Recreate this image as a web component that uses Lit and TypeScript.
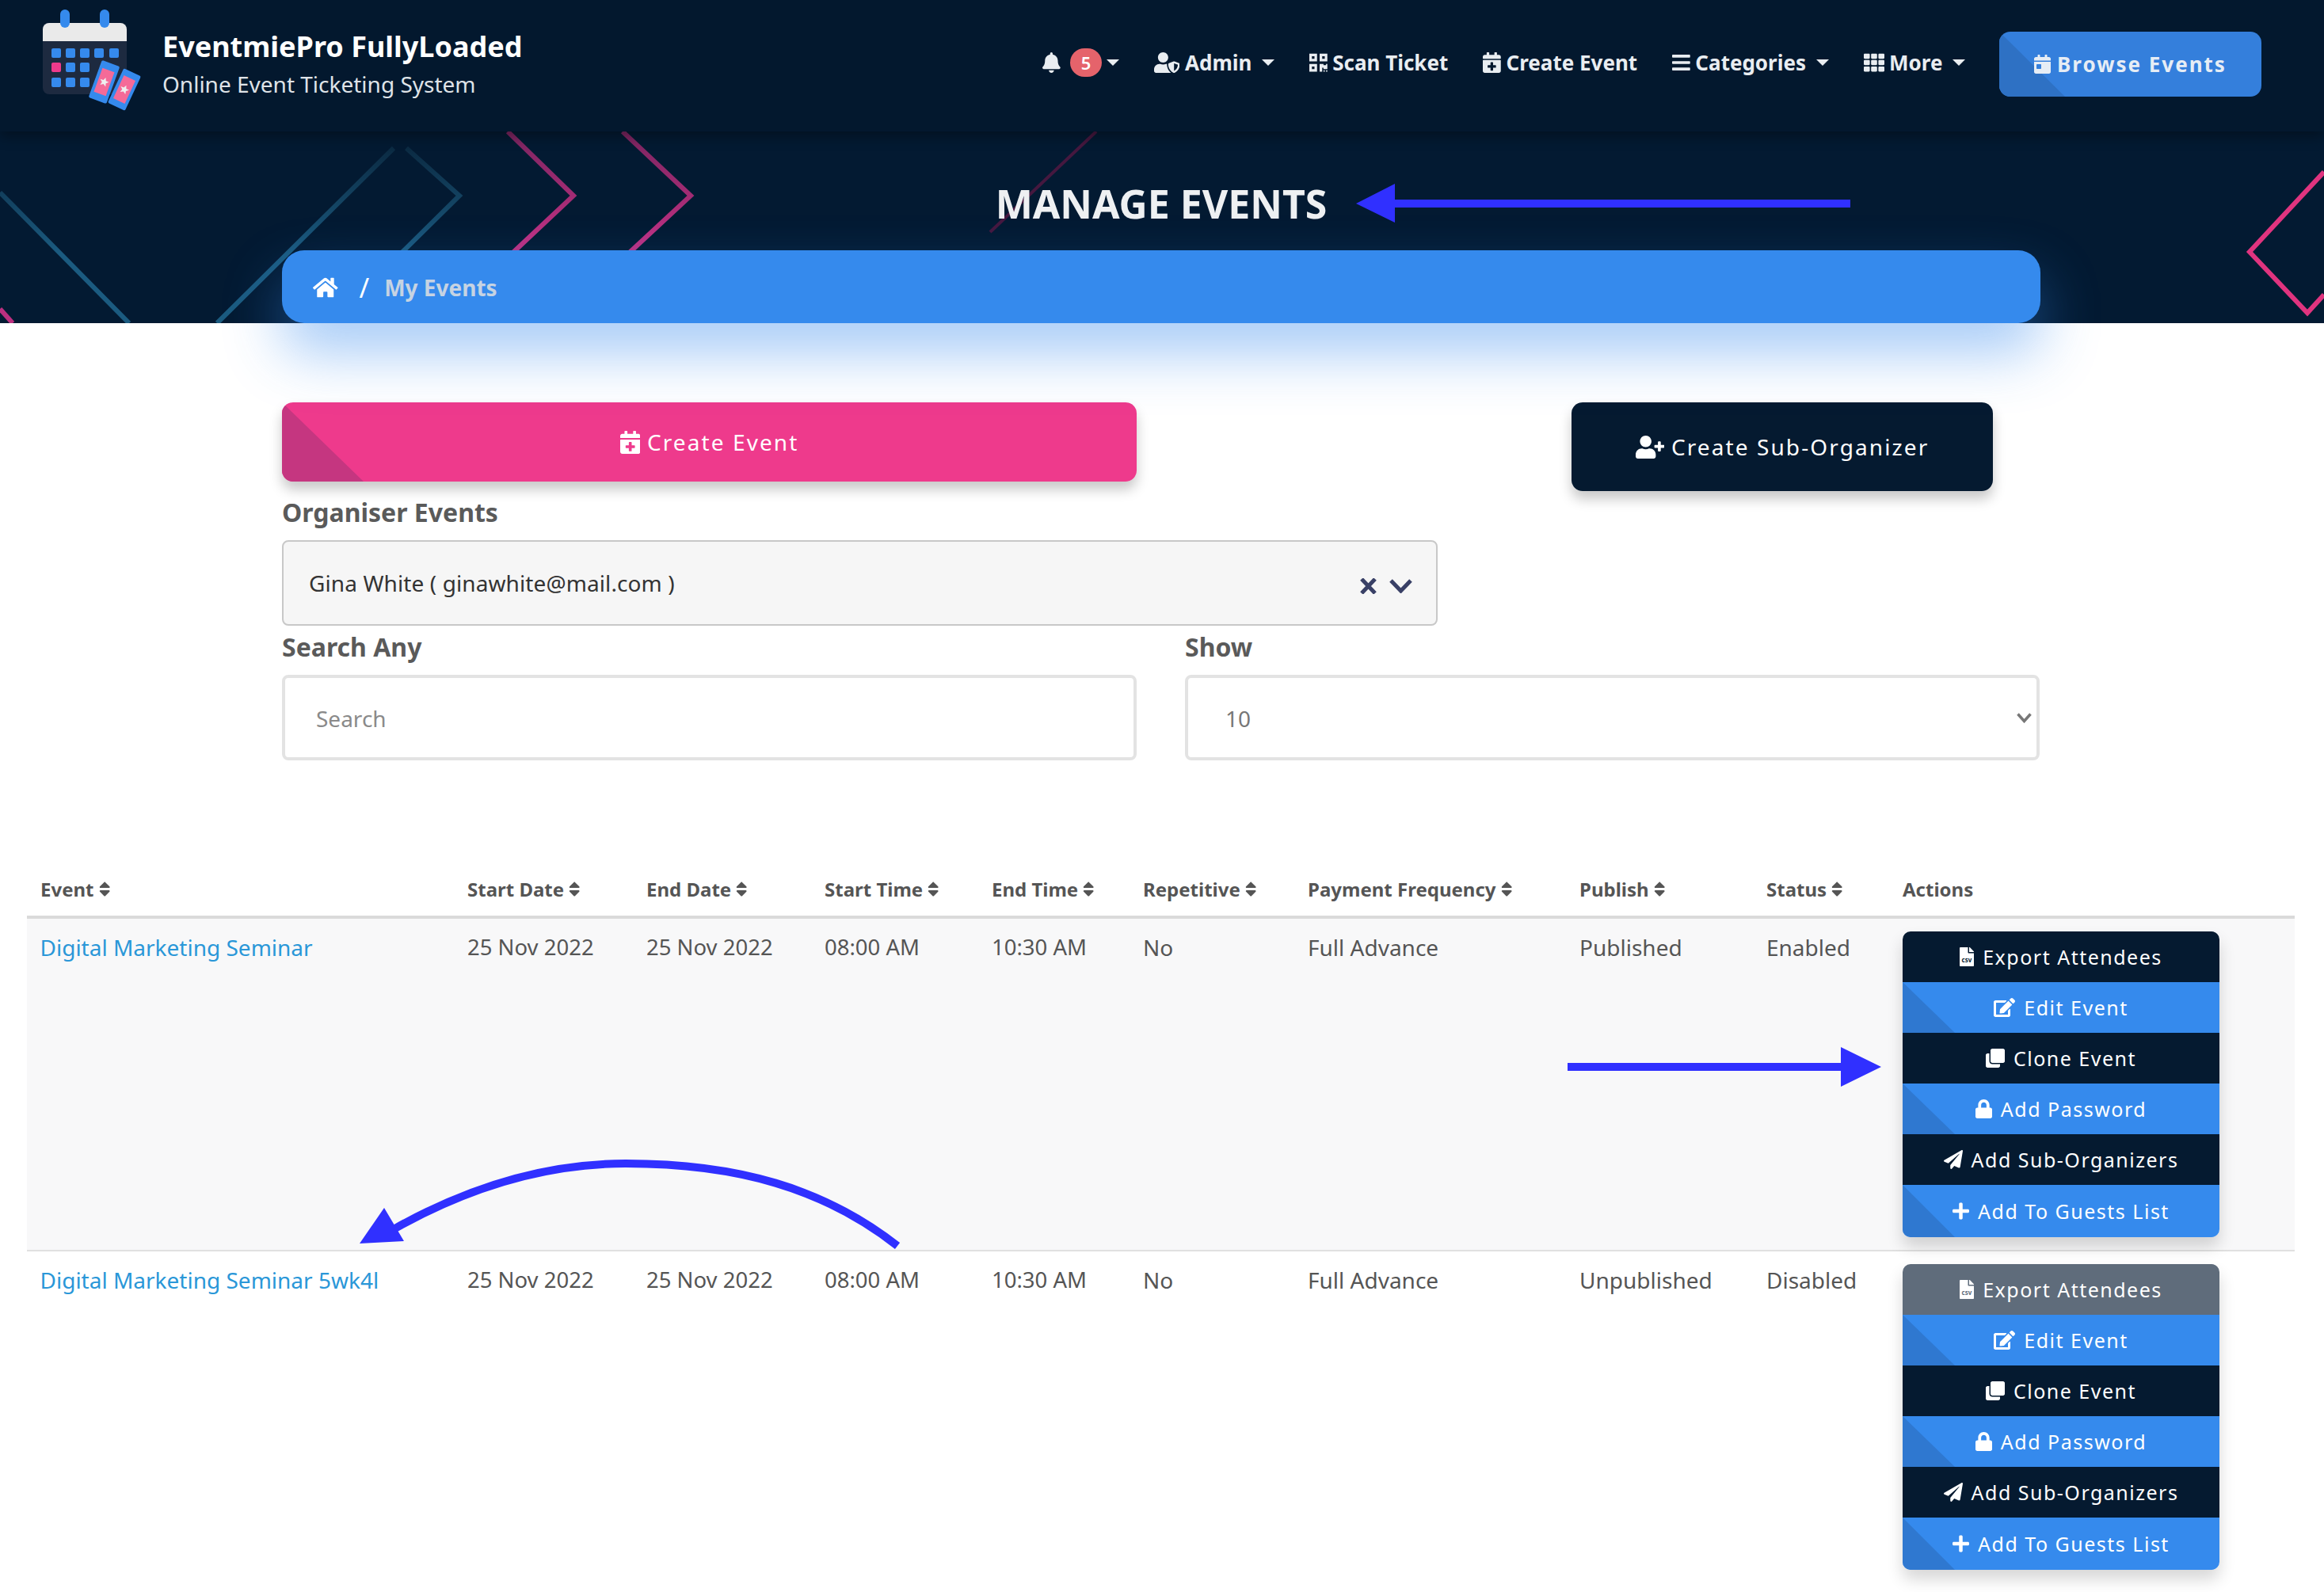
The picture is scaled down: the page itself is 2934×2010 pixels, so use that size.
import { LitElement, html, css } from 'lit';
import { customElement } from 'lit/decorators.js';

const ICONS: Record<string, [number, string]> = {
  bell: [448, 'M224 512c35.32 0 63.97-28.65 63.97-64H160.03c0 35.35 28.65 64 63.97 64zm215.39-149.71c-19.32-20.76-55.47-51.99-55.47-154.29 0-77.7-54.48-139.9-127.94-155.16V32c0-17.67-14.32-32-31.98-32s-31.98 14.33-31.98 32v20.84C118.56 68.1 64.08 130.3 64.08 208c0 102.3-36.15 133.53-55.47 154.29-6 6.45-8.66 14.16-8.61 21.71.11 16.4 12.98 32 32.1 32h383.8c19.12 0 32-15.6 32.1-32 .05-7.55-2.61-15.27-8.61-21.71z'],
  home: [576, 'M280.37 148.26L96 300.11V464a16 16 0 0 0 16 16l112.06-.29a16 16 0 0 0 15.92-16V368a16 16 0 0 1 16-16h64a16 16 0 0 1 16 16v95.64a16 16 0 0 0 16 16.05L464 480a16 16 0 0 0 16-16V300L295.67 148.26a12.19 12.19 0 0 0-15.3 0zM571.6 251.47L488 182.56V44.05a12 12 0 0 0-12-12h-56a12 12 0 0 0-12 12v72.61L318.47 43a48 48 0 0 0-61 0L4.34 251.47a12 12 0 0 0-1.6 16.9l25.5 31A12 12 0 0 0 45.15 301l235.22-193.74a12.19 12.19 0 0 1 15.3 0L530.9 301a12 12 0 0 0 16.9-1.6l25.5-31a12 12 0 0 0-1.7-16.93z'],
  calendarPlus: [448, 'M436 160H12c-6.6 0-12-5.4-12-12v-36c0-26.5 21.5-48 48-48h48V12c0-6.6 5.4-12 12-12h40c6.6 0 12 5.4 12 12v52h128V12c0-6.6 5.4-12 12-12h40c6.6 0 12 5.4 12 12v52h48c26.5 0 48 21.5 48 48v36c0 6.6-5.4 12-12 12zM12 192h424c6.6 0 12 5.4 12 12v260c0 26.5-21.5 48-48 48H48c-26.5 0-48-21.5-48-48V204c0-6.6 5.4-12 12-12zm316 140c0-6.6-5.4-12-12-12h-60v-60c0-6.6-5.4-12-12-12h-40c-6.6 0-12 5.4-12 12v60h-60c-6.6 0-12 5.4-12 12v40c0 6.6 5.4 12 12 12h60v60c0 6.6 5.4 12 12 12h40c6.6 0 12-5.4 12-12v-60h60c6.6 0 12-5.4 12-12v-40z'],
  calendarDay: [448, 'M0 464c0 26.5 21.5 48 48 48h352c26.5 0 48-21.5 48-48V192H0v272zm64-192c0-8.8 7.2-16 16-16h96c8.8 0 16 7.2 16 16v96c0 8.8-7.2 16-16 16H80c-8.8 0-16-7.2-16-16v-96zM400 64h-48V16c0-8.8-7.2-16-16-16h-32c-8.8 0-16 7.2-16 16v48H160V16c0-8.8-7.2-16-16-16h-32c-8.8 0-16 7.2-16 16v48H48C21.5 64 0 85.5 0 112v48h448v-48c0-26.5-21.5-48-48-48z'],
  bars: [448, 'M16 132h416c8.837 0 16-7.163 16-16V76c0-8.837-7.163-16-16-16H16C7.163 60 0 67.163 0 76v40c0 8.837 7.163 16 16 16zm0 160h416c8.837 0 16-7.163 16-16v-40c0-8.837-7.163-16-16-16H16c-8.837 0-16 7.163-16 16v40c0 8.837 7.163 16 16 16zm0 160h416c8.837 0 16-7.163 16-16v-40c0-8.837-7.163-16-16-16H16c-8.837 0-16 7.163-16 16v40c0 8.837 7.163 16 16 16z'],
  th: [512, 'M149.333 56v80c0 13.255-10.745 24-24 24H24c-13.255 0-24-10.745-24-24V56c0-13.255 10.745-24 24-24h101.333c13.255 0 24 10.745 24 24zm181.334 240v-80c0-13.255-10.745-24-24-24H205.333c-13.255 0-24 10.745-24 24v80c0 13.255 10.745 24 24 24h101.333c13.256 0 24.001-10.745 24.001-24zm32-240v80c0 13.255 10.745 24 24 24H488c13.255 0 24-10.745 24-24V56c0-13.255-10.745-24-24-24H386.667c-13.255 0-24 10.745-24 24zm-32 80V56c0-13.255-10.745-24-24-24H205.333c-13.255 0-24 10.745-24 24v80c0 13.255 10.745 24 24 24h101.333c13.256 0 24.001-10.745 24.001-24zm-205.334 56H24c-13.255 0-24 10.745-24 24v80c0 13.255 10.745 24 24 24h101.333c13.255 0 24-10.745 24-24v-80c0-13.255-10.745-24-24-24zM0 376v80c0 13.255 10.745 24 24 24h101.333c13.255 0 24-10.745 24-24v-80c0-13.255-10.745-24-24-24H24c-13.255 0-24 10.745-24 24zm386.667-56H488c13.255 0 24-10.745 24-24v-80c0-13.255-10.745-24-24-24H386.667c-13.255 0-24 10.745-24 24v80c0 13.255 10.745 24 24 24zm0 160H488c13.255 0 24-10.745 24-24v-80c0-13.255-10.745-24-24-24H386.667c-13.255 0-24 10.745-24 24v80c0 13.255 10.745 24 24 24zM181.333 376v80c0 13.255 10.745 24 24 24h101.333c13.255 0 24-10.745 24-24v-80c0-13.255-10.745-24-24-24H205.333c-13.255 0-24 10.745-24 24z'],
  qrcode: [448, 'M0 224h192V32H0v192zM64 96h64v64H64V96zm192-64v192h192V32H256zm128 128h-64V96h64v64zM0 480h192V288H0v192zm64-128h64v64H64v-64zm352-64h32v128h-96v-32h-32v96h-64V288h96v32h64v-32zm0 160h32v32h-32v-32zm-64 0h32v32h-32v-32z'],
  userPlus: [640, 'M624 208h-64v-64c0-8.8-7.2-16-16-16h-32c-8.8 0-16 7.2-16 16v64h-64c-8.8 0-16 7.2-16 16v32c0 8.8 7.2 16 16 16h64v64c0 8.8 7.2 16 16 16h32c8.8 0 16-7.2 16-16v-64h64c8.8 0 16-7.2 16-16v-32c0-8.8-7.2-16-16-16zm-400 48c70.7 0 128-57.3 128-128S294.7 0 224 0 96 57.3 96 128s57.3 128 128 128zm89.6 32h-16.7c-22.2 10.2-46.9 16-72.9 16s-50.6-5.8-72.9-16h-16.7C60.2 288 0 348.2 0 422.4V464c0 26.5 21.5 48 48 48h352c26.5 0 48-21.5 48-48v-41.6c0-74.2-60.2-134.4-134.4-134.4z'],
  userShield: [640, 'M622.3 271.1l-115.2-45c-4.1-1.6-12.6-3.7-22.2 0l-115.2 45c-10.7 4.2-17.7 14-17.7 24.9 0 111.6 68.7 188.8 132.9 213.9 9.6 3.7 18 1.6 22.2 0C558.4 489.9 640 420.5 640 296c0-10.9-7-20.7-17.7-24.9zM496 462.4V273.3l95.5 37.3c-5.6 87.1-60.9 135.4-95.5 151.8zM224 256c70.7 0 128-57.3 128-128S294.7 0 224 0 96 57.3 96 128s57.3 128 128 128zm96 40c0-2.5.8-4.8 1.1-7.2-2.5-.1-4.9-.8-7.5-.8h-16.7c-22.2 10.2-46.9 16-72.9 16s-50.6-5.8-72.9-16h-16.7C60.2 288 0 348.2 0 422.4V464c0 26.5 21.5 48 48 48h352c6.8 0 13.3-1.5 19.2-4-54-42.9-99.2-116.7-99.2-212z'],
  edit: [576, 'M402.6 83.2l90.2 90.2c3.8 3.8 3.8 10 0 13.8L274.4 405.6l-92.8 10.3c-12.4 1.4-22.9-9.1-21.5-21.5l10.3-92.8L388.8 83.2c3.8-3.8 10-3.8 13.8 0zm162-22.9l-48.8-48.8c-15.2-15.2-39.9-15.2-55.2 0l-35.4 35.4c-3.8 3.8-3.8 10 0 13.8l90.2 90.2c3.8 3.8 10 3.8 13.8 0l35.4-35.4c15.2-15.3 15.2-40 0-55.2zM384 346.2V448H64V128h229.8c3.2 0 6.2-1.3 8.5-3.5l40-40c7.6-7.6 2.2-20.5-8.5-20.5H48C21.5 64 0 85.5 0 112v352c0 26.5 21.5 48 48 48h352c26.5 0 48-21.5 48-48V306.2c0-10.7-12.9-16-20.5-8.5l-40 40c-2.2 2.3-3.5 5.3-3.5 8.5z'],
  clone: [512, 'M464 0c26.51 0 48 21.49 48 48v288c0 26.51-21.49 48-48 48H176c-26.51 0-48-21.49-48-48V48c0-26.51 21.49-48 48-48h288M176 416c-44.112 0-80-35.888-80-80V128H48c-26.51 0-48 21.49-48 48v288c0 26.51 21.49 48 48 48h288c26.51 0 48-21.49 48-48v-48H176z'],
  lock: [448, 'M400 224h-24v-72C376 68.2 307.8 0 224 0S72 68.2 72 152v72H48c-26.5 0-48 21.5-48 48v192c0 26.5 21.5 48 48 48h352c26.5 0 48-21.5 48-48V272c0-26.5-21.5-48-48-48zm-104 0H152v-72c0-39.7 32.3-72 72-72s72 32.3 72 72v72z'],
  plane: [512, 'M476 3.2L12.5 270.6c-18.1 10.4-15.8 35.6 2.2 43.2L121 358.4l287.3-253.2c5.5-4.9 13.3 2.6 8.6 8.3L176 407v80.5c0 23.6 28.5 32.9 42.5 15.8L282 426l124.6 52.2c14.2 6 30.4-2.9 33-18.2l72-432C515 7.8 493.3-6.8 476 3.2z'],
  plus: [448, 'M416 208H272V64c0-17.67-14.33-32-32-32h-32c-17.67 0-32 14.33-32 32v144H32c-17.67 0-32 14.33-32 32v32c0 17.67 14.33 32 32 32h144v144c0 17.67 14.33 32 32 32h32c17.67 0 32-14.33 32-32V304h144c17.67 0 32-14.33 32-32v-32c0-17.67-14.33-32-32-32z'],
  sort: [320, 'M41 288h238c21.4 0 32.1 25.9 17 41L177 448c-9.4 9.4-24.6 9.4-33.9 0L24 329c-15.1-15.1-4.4-41 17-41zm255-105L177 64c-9.4-9.4-24.6-9.4-33.9 0L24 183c-15.1 15.1-4.4 41 17 41h238c21.4 0 32.1-25.9 17-41z'],
};

const FILE_PATH = 'M224 136V0H24C10.7 0 0 10.7 0 24v464c0 13.3 10.7 24 24 24h336c13.3 0 24-10.7 24-24V160H248c-13.2 0-24-10.8-24-24zM377 105L279.1 7c-4.5-4.5-10.6-7-17-7H256v128h128v-6.1c0-6.3-2.5-12.4-7-16.9z';

const icon = (name: string) => {
  const [w, d] = ICONS[name];
  return html`<svg class="ic" viewBox="0 0 ${w} 512" fill="currentColor"><path d=${d}></path></svg>`;
};

const NAV = [
  { icon: 'userShield', label: 'Admin', caret: true },
  { icon: 'qrcode', label: 'Scan Ticket', caret: false },
  { icon: 'calendarPlus', label: 'Create Event', caret: false },
  { icon: 'bars', label: 'Categories', caret: true },
  { icon: 'th', label: 'More', caret: true },
];

const HEADS = ['Event', 'Start Date', 'End Date', 'Start Time', 'End Time', 'Repetitive', 'Payment Frequency', 'Publish', 'Status'];

const ROWS = [
  { name: 'Digital Marketing Seminar', publish: 'Published', status: 'Enabled', muted: false },
  { name: 'Digital Marketing Seminar 5wk4l', publish: 'Unpublished', status: 'Disabled', muted: true },
];

const ACTIONS = [
  { icon: 'edit', label: 'Edit Event', blue: true },
  { icon: 'clone', label: 'Clone Event', blue: false },
  { icon: 'lock', label: 'Add Password', blue: true },
  { icon: 'plane', label: 'Add Sub-Organizers', blue: false },
  { icon: 'plus', label: 'Add To Guests List', blue: true },
];

const STAR = '0,-9 2.6,-3 9,-2.8 4,1.4 5.6,7.6 0,4.2 -5.6,7.6 -4,1.4 -9,-2.8 -2.6,-3';

@customElement('app-root')
export class AppRoot extends LitElement {
  static styles = css`
    :host {
      display: block;
      position: relative;
      height: 2010px;
      overflow: hidden;
      background: #fff;
      font-family: 'Noto Sans', 'Open Sans', sans-serif;
      color: #555;
    }

    .ic { display: block; flex: none; height: 24px; width: auto; }

    /* header */
    .header {
      position: relative;
      z-index: 3;
      height: 166px;
      padding: 0 79px 0 30px;
      display: flex;
      align-items: center;
      background: #03182e;
      box-shadow: 0 6px 16px rgba(0, 0, 0, 0.35);
      box-sizing: border-box;
    }
    .logo { flex: none; width: 170px; height: 150px; }
    .brand { margin: 0 0 6px 5px; display: flex; flex-direction: column; gap: 3px; }
    .brand-title { font-size: 36px; line-height: 48px; font-weight: 700; color: #fff; }
    .brand-sub { font-size: 28px; line-height: 40px; color: #dfe3e8; }

    .nav { margin: 0 0 4px auto; display: flex; align-items: center; gap: 44px; color: #e9edf1; }
    .nav-item { display: flex; align-items: center; gap: 6.5px; margin-bottom: 4px; font-size: 26px; line-height: 36px; font-weight: 700; }
    .nav-item .ic { height: 26px; }
    .caret {
      margin-left: 6px;
      width: 0;
      height: 0;
      border-left: 8px solid transparent;
      border-right: 8px solid transparent;
      border-top: 8px solid currentColor;
    }
    .bell { gap: 0; }
    .badge {
      margin-left: 12px;
      width: 40px;
      height: 36px;
      border-radius: 18px;
      background: #e5636b;
      color: #fff;
      font-size: 22px;
      font-weight: 600;
      text-align: center;
      line-height: 36px;
    }
    .browse {
      position: relative;
      overflow: hidden;
      width: 331px;
      height: 82px;
      margin-left: -1px;
      display: flex;
      align-items: center;
      justify-content: center;
      gap: 8px;
      border-radius: 14px;
      background: #347fdc;
      color: #e6edf5;
      font-size: 26px;
      font-weight: 700;
      letter-spacing: 2px;
    }
    .browse::before, .btn-pink::before, .act.blue::before {
      content: '';
      position: absolute;
      left: 0;
      top: 0;
      bottom: 0;
      clip-path: polygon(0 0, 100% 100%, 0 100%);
    }
    .browse::before { width: 83px; background: #2e71c4; }
    .browse span, .browse .ic { position: relative; }

    /* hero */
    .hero {
      position: relative;
      z-index: 2;
      height: 242px;
      display: flex;
      flex-direction: column;
      align-items: center;
      padding-top: 56px;
      box-sizing: border-box;
      background: #031a32;
    }
    .chevrons { position: absolute; inset: 0; width: 100%; height: 100%; }
    .hero h1 {
      position: relative;
      margin: 0 2px 24px 0;
      font-size: 50px;
      line-height: 70px;
      font-weight: 700;
      color: #eef0f2;
    }
    .crumb {
      position: relative;
      box-sizing: border-box;
      width: 2220px;
      height: 92px;
      margin-right: 2px;
      padding: 2px 0 0 39px;
      display: flex;
      align-items: center;
      border-radius: 28px;
      background: #358aed;
      box-shadow: 0 36px 72px rgba(54, 138, 237, 0.46);
      font-size: 28px;
      font-weight: 700;
      color: #c6d3e2;
    }
    .crumb .ic { color: #fff; height: 28px; }
    .crumb .sep { margin: 0 19px 0 27px; color: #fff; font-size: 34px; font-weight: 400; }

    /* form */
    .form { width: 2220px; margin-left: 356px; padding-top: 100px; }
    .btns { display: flex; align-items: flex-start; gap: 549px; }
    .btn {
      position: relative;
      overflow: hidden;
      box-sizing: border-box;
      display: flex;
      align-items: center;
      justify-content: center;
      gap: 9px;
      border-radius: 14px;
      color: #fff;
      font-size: 28px;
      letter-spacing: 2.1px;
    }
    .btn-wrap { border-radius: 14px; box-shadow: 0 10px 16px rgba(0, 0, 0, 0.22); }
    .btn-pink { width: 1079px; height: 100px; background: #ee3a8c; }
    .btn-pink::before { width: 103px; background: #c53680; }
    .btn-pink span, .btn-pink .ic { position: relative; }
    .btn-dark { width: 532px; height: 112px; background: #051a30; }
    .btn-pink .ic, .btn-dark .ic { height: 29px; }

    .label { font-size: 32px; line-height: 44px; font-weight: 700; color: #5a5a5a; }
    .label-org { margin-top: 5px; margin-bottom: 13px; }

    .org {
      box-sizing: border-box;
      width: 1459px;
      height: 108px;
      padding: 0 30px 0 32px;
      display: flex;
      align-items: center;
      background: #f6f6f6;
      border: 2px solid #c8c8c8;
      border-radius: 8px;
      color: #333;
      font-size: 28px;
      letter-spacing: 0.1px;
    }
    .org-icons { margin-left: auto; display: flex; align-items: center; gap: 16px; padding-top: 8px; }
    .org-x { width: 21px; height: 20px; }
    .org-chev { width: 29px; height: 18px; }

    .filters {
      margin-top: 5px;
      display: grid;
      grid-template-columns: 1079px 1079px;
      column-gap: 61px;
    }
    .filters .label { margin-bottom: 13px; }
    .field {
      position: relative;
      box-sizing: border-box;
      width: 100%;
      height: 108px;
      padding-top: 2px;
      border: 4px solid #e3e3e3;
      border-radius: 8px;
      background: #fff;
      font: 28px 'Noto Sans', sans-serif;
      color: #777;
      outline: none;
    }
    input.field { padding: 2px 39px 0; }
    input.field::placeholder { color: #8a8a8a; opacity: 1; }
    select.field { padding: 2px 47px 0; appearance: none; }
    .select-wrap { position: relative; }
    .select-chev { position: absolute; right: 10px; top: 48px; width: 19px; height: 13px; }

    /* table */
    .table { margin: 130px 37px 0 34px; }
    .row {
      display: grid;
      grid-template-columns: 539px 226px 225px 211px 191px 208px 343px 236px 172px 512px;
    }
    .thead { border-bottom: 4px solid #dadada; height: 66px; box-sizing: content-box; }
    .th {
      padding: 0 17px;
      display: flex;
      align-items: center;
      gap: 6px;
      height: 66px;
      margin-top: -1px;
      font-size: 24px;
      font-weight: 700;
      color: #555;
      white-space: nowrap;
    }
    .th .ic { height: 23px; }
    .tr.odd { background: #f8f8f9; border-bottom: 2px solid #e0e0e0; }
    .td {
      padding: 16px 17px;
      font-size: 28px;
      line-height: 40px;
      color: #555;
      white-space: nowrap;
    }
    .td.when { font-size: 27.5px; }
    .td a { color: #2a97d8; text-decoration: none; margin-left: -0.5px; }

    .stack {
      width: 400px;
      border-radius: 10px;
      overflow: hidden;
      box-shadow: 0 12px 20px rgba(0, 0, 0, 0.16);
    }
    .act {
      --row-bg: #051a30;
      position: relative;
      box-sizing: border-box;
      height: 64px;
      display: flex;
      align-items: center;
      justify-content: center;
      gap: 11px;
      background: var(--row-bg);
      color: #fff;
      font-size: 25px;
      letter-spacing: 1.5px;
    }
    .act:last-child { height: 66px; }
    .act.blue { --row-bg: #358aed; }
    .act.blue::before { width: 66px; background: #2f78d0; }
    .act.muted { --row-bg: #5f6c7b; }
    .act span, .act .ic { position: relative; }
    .csv-text { font: 700 170px 'Noto Sans', sans-serif; fill: var(--row-bg); }

    /* annotations sit over the page */
    .marks { position: absolute; left: 0; top: 0; width: 2934px; height: 2010px; z-index: 5; pointer-events: none; }
  `;

  private renderStack(muted: boolean) {
    return html`
      <div class="stack">
        <div class="act ${muted ? 'muted' : ''}">
          <svg class="ic" viewBox="0 0 384 512" fill="currentColor">
            <path d=${FILE_PATH}></path>
            <text class="csv-text" x="192" y="410" text-anchor="middle">csv</text>
          </svg>
          <span>Export Attendees</span>
        </div>
        ${ACTIONS.map(a => html`
          <div class="act ${a.blue ? 'blue' : ''}">${icon(a.icon)}<span>${a.label}</span></div>
        `)}
      </div>
    `;
  }

  render() {
    return html`
      <header class="header">
        <svg class="logo" viewBox="30 8 170 150">
          <rect x="54" y="29" width="106" height="90" rx="8" fill="#1d2a40"></rect>
          <path d="M54 52V37a8 8 0 0 1 8-8h90a8 8 0 0 1 8 8v15z" fill="#eaeaea"></path>
          <rect x="76" y="12" width="12" height="23" rx="6" fill="#358aed"></rect>
          <rect x="126" y="12" width="12" height="23" rx="6" fill="#358aed"></rect>
          ${[65, 83, 101, 119, 138].map(x => html`<svg><rect x=${x} y="61" width="12" height="12" rx="2" fill="#358aed"></rect></svg>`)}
          ${[65, 83, 101].map((x, i) => html`<svg><rect x=${x} y="79" width="12" height="12" rx="2" fill=${i === 0 ? '#ee3a8c' : '#358aed'}></rect></svg>`)}
          ${[65, 83, 101].map(x => html`<svg><rect x=${x} y="98" width="12" height="12" rx="2" fill="#358aed"></rect></svg>`)}
          <g transform="translate(131.5 103.5) rotate(20)">
            <rect x="-12" y="-25" width="24" height="50" rx="2" fill="#358aed"></rect>
            <rect x="-8" y="-16" width="16" height="32" fill="#f56a98"></rect>
            <polygon points=${STAR} transform="scale(.65)" fill="#eee"></polygon>
          </g>
          <g transform="translate(157 113) rotate(25)">
            <rect x="-12" y="-24" width="24" height="48" rx="2" fill="#358aed"></rect>
            <rect x="-8" y="-16" width="16" height="32" fill="#f56a98"></rect>
            <polygon points=${STAR} transform="scale(.65)" fill="#eee"></polygon>
          </g>
        </svg>
        <div class="brand">
          <div class="brand-title">EventmiePro FullyLoaded</div>
          <div class="brand-sub">Online Event Ticketing System</div>
        </div>
        <nav class="nav">
          <div class="nav-item bell">${icon('bell')}<span class="badge">5</span><span class="caret"></span></div>
          ${NAV.map(n => html`
            <div class="nav-item">${icon(n.icon)}<span>${n.label}</span>${n.caret ? html`<span class="caret"></span>` : ''}</div>
          `)}
          <div class="browse">${icon('calendarDay')}<span>Browse Events</span></div>
        </nav>
      </header>

      <section class="hero">
        <svg class="chevrons" viewBox="0 166 2934 242" fill="none" stroke-width="6">
          <defs>
            <linearGradient id="pink" gradientUnits="userSpaceOnUse" x1="0" y1="166" x2="0" y2="300">
              <stop offset="0" stop-color="#7a2560"></stop>
              <stop offset="1" stop-color="#bc3080"></stop>
            </linearGradient>
            <linearGradient id="teal" gradientUnits="userSpaceOnUse" x1="0" y1="185" x2="0" y2="320">
              <stop offset="0" stop-color="#0b2a42"></stop>
              <stop offset="1" stop-color="#1b5b80"></stop>
            </linearGradient>
          </defs>
          <path d="M641 166L724 247L640 326M786 166L872 247L787 326" stroke="url(#pink)"></path>
          <path d="M0 390L16 408" stroke="#bc3080"></path>
          <path d="M0 243L163 408M274 408L497 187M513 187L580 247L500 326" stroke="url(#teal)"></path>
          <path d="M1384 166L1250 293" stroke="#45183f" stroke-width="4"></path>
          <path d="M2934 217L2840 318L2913 395L2934 372" stroke="#e0347f"></path>
        </svg>
        <h1>MANAGE EVENTS</h1>
        <div class="crumb">${icon('home')}<span class="sep">/</span><span>My Events</span></div>
      </section>

      <section class="form">
        <div class="btns">
          <div class="btn-wrap"><div class="btn btn-pink">${icon('calendarPlus')}<span>Create Event</span></div></div>
          <div class="btn-wrap"><div class="btn btn-dark">${icon('userPlus')}<span>Create Sub-Organizer</span></div></div>
        </div>
        <div class="label label-org">Organiser Events</div>
        <div class="org">
          <span>Gina White ( ginawhite@mail.com )</span>
          <span class="org-icons">
            <svg class="org-x" viewBox="0 0 21 20" fill="none" stroke="#394066" stroke-width="5"><path d="M2 1L19 19M19 1L2 19"></path></svg>
            <svg class="org-chev" viewBox="0 0 29 18" fill="none" stroke="#394066" stroke-width="5"><path d="M2 2L14.5 15L27 2"></path></svg>
          </span>
        </div>
        <div class="filters">
          <div>
            <div class="label">Search Any</div>
            <input class="field" placeholder="Search" />
          </div>
          <div>
            <div class="label">Show</div>
            <div class="select-wrap">
              <select class="field"><option>10</option></select>
              <svg class="select-chev" viewBox="0 0 19 13" fill="none" stroke="#777" stroke-width="3.5"><path d="M1.5 1.5L9.5 10.5L17.5 1.5"></path></svg>
            </div>
          </div>
        </div>
      </section>

      <section class="table">
        <div class="row thead">
          ${HEADS.map(h => html`<div class="th"><span>${h}</span>${icon('sort')}</div>`)}
          <div class="th"><span>Actions</span></div>
        </div>
        ${ROWS.map((r, i) => html`
          <div class="row tr ${i % 2 === 0 ? 'odd' : ''}">
            <div class="td"><a>${r.name}</a></div>
            <div class="td when">25 Nov 2022</div>
            <div class="td when">25 Nov 2022</div>
            <div class="td when">08:00 AM</div>
            <div class="td when">10:30 AM</div>
            <div class="td">No</div>
            <div class="td">Full Advance</div>
            <div class="td">${r.publish}</div>
            <div class="td">${r.status}</div>
            <div class="td">${this.renderStack(r.muted)}</div>
          </div>
        `)}
      </section>

      <svg class="marks" viewBox="0 0 2934 2010">
        <path d="M2336 252H1761V232L1712 257L1761 281V262H2336z" fill="#3030ff"></path>
        <path d="M1979 1342H2324V1322L2375 1347L2324 1372V1352H1979z" fill="#3030ff"></path>
        <path d="M1133 1573C1040 1500 930 1469 790 1469C680 1469 580 1505 497 1552" fill="none" stroke="#3030ff" stroke-width="10"></path>
        <polygon points="485,1525 454,1570 510,1567" fill="#3030ff"></polygon>
      </svg>
    `;
  }
}
